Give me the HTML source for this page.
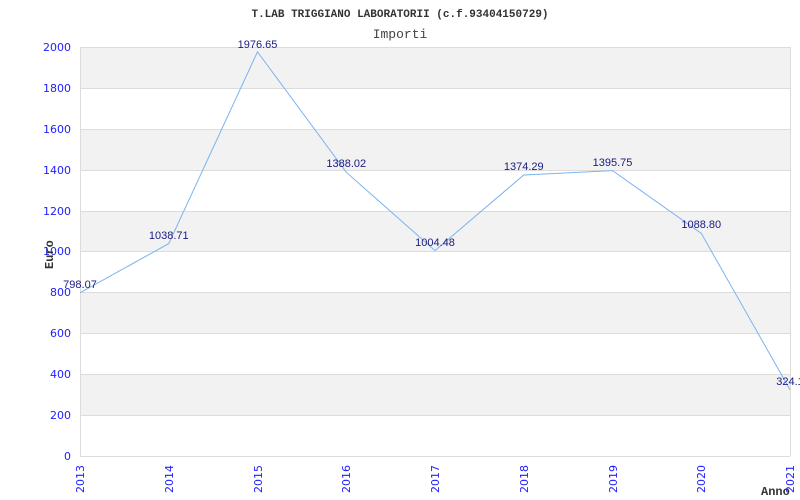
<!DOCTYPE html>
<html><head><meta charset="utf-8"><style>
html,body{margin:0;padding:0;background:#fff;width:800px;height:500px;overflow:hidden}
.d{font-family:"DejaVu Sans",sans-serif}
.l{font-family:"Liberation Sans",sans-serif}
.m{font-family:"Liberation Mono",monospace}
</style></head><body>
<svg width="800" height="500" viewBox="0 0 800 500" xmlns="http://www.w3.org/2000/svg">
<g fill="#f2f2f2">
<rect x="80" y="47" width="710" height="41"/>
<rect x="80" y="129" width="710" height="41"/>
<rect x="80" y="211" width="710" height="40"/>
<rect x="80" y="292" width="710" height="41"/>
<rect x="80" y="374" width="710" height="41"/>
</g>
<g stroke="#dcdcdc" stroke-width="1">
<line x1="80" y1="47.5" x2="790" y2="47.5"/>
<line x1="80" y1="88.5" x2="790" y2="88.5"/>
<line x1="80" y1="129.5" x2="790" y2="129.5"/>
<line x1="80" y1="170.5" x2="790" y2="170.5"/>
<line x1="80" y1="211.5" x2="790" y2="211.5"/>
<line x1="80" y1="251.5" x2="790" y2="251.5"/>
<line x1="80" y1="292.5" x2="790" y2="292.5"/>
<line x1="80" y1="333.5" x2="790" y2="333.5"/>
<line x1="80" y1="374.5" x2="790" y2="374.5"/>
<line x1="80" y1="415.5" x2="790" y2="415.5"/>
<line x1="80" y1="456.5" x2="790" y2="456.5"/>
<line x1="80.5" y1="47" x2="80.5" y2="456"/>
<line x1="790.5" y1="47" x2="790.5" y2="456"/>
</g>
<g class="d" fill="#2020ff" font-size="11" text-anchor="end">
<text x="71" y="51">2000</text><text x="71" y="92">1800</text><text x="71" y="133">1600</text>
<text x="71" y="174">1400</text><text x="71" y="215">1200</text><text x="71" y="255">1000</text>
<text x="71" y="296">800</text><text x="71" y="337">600</text><text x="71" y="378">400</text>
<text x="71" y="419">200</text><text x="71" y="460">0</text>
</g>
<g class="d" fill="#2020ff" font-size="11" text-anchor="end">
<text transform="translate(84,465) rotate(-90)">2013</text>
<text transform="translate(173,465) rotate(-90)">2014</text>
<text transform="translate(262,465) rotate(-90)">2015</text>
<text transform="translate(350,465) rotate(-90)">2016</text>
<text transform="translate(439,465) rotate(-90)">2017</text>
<text transform="translate(528,465) rotate(-90)">2018</text>
<text transform="translate(617,465) rotate(-90)">2019</text>
<text transform="translate(705,465) rotate(-90)">2020</text>
<text transform="translate(794,465) rotate(-90)">2021</text>
</g>
<polyline fill="none" stroke="#7ab4f0" stroke-width="1" points="80,292.8 168.75,243.6 257.5,51.8 346.25,172.2 435,250.6 523.75,175 612.5,170.6 701.25,233.3 790,389.7"/>
<g class="l" fill="#1a1a80" font-size="11" text-anchor="middle">
<text x="80" y="288">798.07</text>
<text x="168.75" y="239">1038.71</text>
<text x="257.5" y="48">1976.65</text>
<text x="346.25" y="167">1388.02</text>
<text x="435" y="246">1004.48</text>
<text x="523.75" y="170">1374.29</text>
<text x="612.5" y="166">1395.75</text>
<text x="701.25" y="228">1088.80</text>
<text x="790" y="385">324.1</text>
</g>
<text class="m" x="400" y="17" text-anchor="middle" font-weight="bold" font-size="11" fill="#333">T.LAB TRIGGIANO LABORATORII (c.f.93404150729)</text>
<text class="m" x="400" y="38" text-anchor="middle" font-size="13" fill="#444">Importi</text>
<text class="m" transform="translate(53,269) rotate(-90)" font-weight="bold" font-size="12" fill="#333">Euro</text>
<text class="m" x="761" y="495" font-weight="bold" font-size="12" fill="#333">Anno</text>
</svg>
</body></html>
